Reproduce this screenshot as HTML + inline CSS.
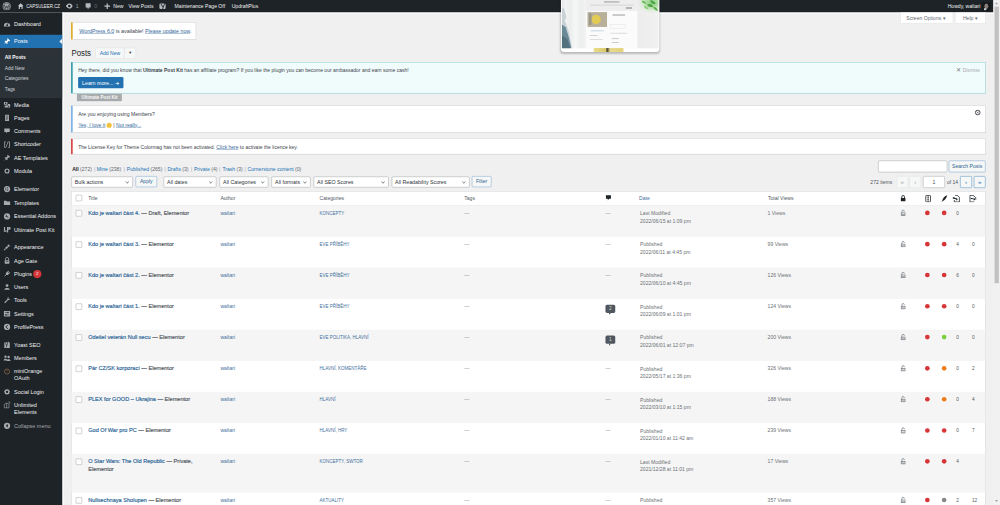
<!DOCTYPE html>
<html><head><meta charset="utf-8"><style>
html,body{margin:0;padding:0;width:1000px;height:505px;overflow:hidden;background:#f0f0f1;}
*{box-sizing:border-box;}
#root{position:absolute;left:0;top:0;width:2560px;height:1293px;transform:scale(0.390625);transform-origin:0 0;font-family:"Liberation Sans",sans-serif;font-size:13px;color:#3c434a;background:#f0f0f1;overflow:hidden;}
.a{position:absolute;white-space:nowrap;}
#ab{position:absolute;left:0;top:0;width:2543px;height:32px;background:#1d2327;color:#f0f0f1;font-size:13px;}
#ab .t{position:absolute;top:0;line-height:32px;white-space:nowrap;color:#f0f0f1;}
#ab svg, #menu svg{position:absolute;}
#menu{position:absolute;left:0;top:32px;width:160px;height:1261px;background:#1d2327;}
#menu .n{position:absolute;left:36px;white-space:nowrap;color:#f0f0f1;font-size:14px;line-height:18px;}
#menu .s{position:absolute;left:12px;font-size:12.6px;color:rgba(240,246,252,.82);white-space:nowrap;line-height:18px;}
#sb{position:absolute;left:2543px;top:0;width:17px;height:1293px;background:#f1f1f1;}
.lk{color:#35699a;text-decoration:underline;}
.notice{position:absolute;left:182px;width:2341px;background:#fff;border:1px solid #c3c4c7;border-left-width:4px;box-shadow:0 1px 1px rgba(0,0,0,.04);}
.btn2{position:absolute;height:30px;border:1px solid #5b8fc0;background:#f6f7f7;color:#2a5f8f;border-radius:3px;text-align:center;line-height:28px;font-size:13px;white-space:nowrap;}
.sel{position:absolute;height:28px;border:1px solid #8c8f94;background:#fff;border-radius:3px;color:#2c3338;font-size:13.5px;line-height:26px;padding-left:8px;white-space:nowrap;}
.sel:after{content:"";position:absolute;right:10px;top:8px;width:6px;height:6px;border-right:1.5px solid #50575e;border-bottom:1.5px solid #50575e;transform:rotate(45deg);}
.pbtn{position:absolute;height:30px;width:30px;border:1px solid #dcdcde;background:#f6f7f7;color:#a7aaad;border-radius:3px;text-align:center;line-height:28px;font-size:16px;}
.pbtn.on{border-color:#2271b1;color:#2271b1;}
.cb{position:absolute;width:16px;height:16px;border:1.3px solid #8c8f94;background:#fff;border-radius:2px;}
.hd{position:absolute;color:#50575e;font-size:13px;line-height:19.5px;white-space:nowrap;}
.hl{color:#2271b1;}
.hd.hl{color:#3f6d99;}
.c{position:absolute;font-size:13px;line-height:19.5px;white-space:nowrap;}
.ttl{color:#2a6496;font-size:14.3px;-webkit-text-stroke:0.4px #2a6496;}
.dot{position:absolute;width:12px;height:12px;border-radius:50%;}
</style></head><body><div id="root">
<div id="ab">
<svg style="left:6px;top:5px" width="22" height="22" viewBox="0 0 20 20"><circle cx="10" cy="10" r="9.5" fill="#a7aaad"/><circle cx="10" cy="10" r="7.8" fill="#1d2327"/><circle cx="10" cy="10" r="6.8" fill="#a7aaad"/><path d="M4.5 6.5 L7.5 15 L10 9 L12.5 15 L15.5 6.5" fill="none" stroke="#1d2327" stroke-width="1.6"/></svg>
<svg style="left:45px;top:7px" width="16" height="17" viewBox="0 0 16 17"><path d="M8 1 L15 8 L13 8 L13 16 L10 16 L10 11 L6 11 L6 16 L3 16 L3 8 L1 8 Z" fill="#c3c4c7"/></svg>
<div class="t" style="left:67px;font-size:13px;color:#f0f0f1;transform:scaleX(0.87);transform-origin:0 0">CAPSULEER.CZ</div>
<svg style="left:168px;top:7px" width="19" height="17" viewBox="0 0 19 17"><circle cx="9.5" cy="8.5" r="5" fill="none" stroke="#c3c4c7" stroke-width="3"/><path d="M0.5 8.5 L5 4 L5 13 Z M18.5 8.5 L14 4 L14 13Z" fill="#c3c4c7"/></svg>
<div class="t" style="left:194px;color:#9ea3a8">1</div>
<svg style="left:218px;top:7px" width="15" height="18" viewBox="0 0 15 18"><path d="M1 1 H14 V12 H9.5 L7.5 17 L5.5 12 H1 Z" fill="#b4b9be"/></svg>
<div class="t" style="left:241px;color:#646970;">0</div>
<svg style="left:267px;top:8px" width="15" height="15" viewBox="0 0 15 15"><path d="M6 0 H9 V6 H15 V9 H9 V15 H6 V9 H0 V6 H6 Z" fill="#c3c4c7"/></svg>
<div class="t" style="left:290px;">New</div>
<div class="t" style="left:329px;">View Posts</div>
<svg style="left:407px;top:6px" width="19" height="21" viewBox="0 0 19 21"><rect x="1" y="3" width="16" height="14" rx="3" fill="#b4b9be"/><path d="M5 4 L9.5 12 M15 1 L8.5 19" stroke="#1d2327" stroke-width="2.2" fill="none"/></svg>
<div class="t" style="left:447px;">Maintenance Page Off</div>
<div class="t" style="left:593px;">UpdraftPlus</div>
<div class="t" style="left:2426px;">Howdy, waltari</div>
<div class="a" style="left:2514px;top:6px;width:22px;height:22px;background:#15181a;overflow:hidden"><div class="a" style="left:6px;top:3px;width:10px;height:14px;border-radius:50%;background:#8a7d78"></div><div class="a" style="left:5px;top:15px;width:6px;height:5px;background:#c8c8c8"></div></div>
</div>
<div id="menu">
<svg style="left:8px;top:19px" width="20" height="20" viewBox="0 0 20 20"><path d="M2 15 A8 8 0 0 1 18 15 V17 H2 Z" fill="#a7aaad"/><path d="M10 14 L13 8" stroke="#1d2327" stroke-width="2"/><circle cx="10" cy="14" r="2" fill="#1d2327"/></svg>
<div class="n" style="top:20px">Dashboard</div>
<div class="a" style="left:0;top:57px;width:160px;height:34px;background:#2271b1"></div>
<svg style="left:151px;top:66px" width="9" height="16" viewBox="0 0 9 16"><path d="M9 0 L1 8 L9 16 Z" fill="#f0f0f1"/></svg>
<svg style="left:8px;top:64px" width="20" height="20" viewBox="0 0 20 20" fill="#fff"><path d="M12 2 L18 8 L16.5 9.5 L14 9 L11 12 L11.5 15 L10 16.5 L3.5 10 L5 8.5 L8 9 L11 6 L10.5 3.5 Z M6 13 L2 18 L7 14 Z"/></svg>
<div class="n" style="top:65px;color:#fff">Posts</div>
<div class="a" style="left:0;top:91px;width:160px;height:128px;background:#2c3338"></div>
<div class="s" style="top:104.5px;color:#fff;font-weight:bold">All Posts</div>
<div class="s" style="top:132.75px;">Add New</div>
<div class="s" style="top:161.0px;">Categories</div>
<div class="s" style="top:189.25px;">Tags</div>
<svg style="left:8px;top:226px" width="20" height="20" viewBox="0 0 20 20" fill="#a7aaad"><rect x="2" y="3" width="9" height="7" rx="1"/><circle cx="6.5" cy="6.5" r="1.8" fill="#1d2327"/><path d="M12 8 H18 V17 H4 V12 H12 Z"/><circle cx="14" cy="14" r="1.6" fill="#1d2327"/></svg>
<div class="n" style="top:227px;">Media</div>
<svg style="left:8px;top:260px" width="20" height="20" viewBox="0 0 20 20" fill="#a7aaad"><path d="M5 2 H15 V18 H5 Z"/><path d="M7 5 H13 M7 8 H13 M7 11 H13 M7 14 H11" stroke="#1d2327" stroke-width="1.2"/></svg>
<div class="n" style="top:261px;">Pages</div>
<svg style="left:8px;top:294px" width="20" height="20" viewBox="0 0 20 20" fill="#a7aaad"><path d="M3 3 H17 V12 H11 L8 16 V12 H3 Z"/></svg>
<div class="n" style="top:295px;">Comments</div>
<svg style="left:8px;top:328px" width="20" height="20" viewBox="0 0 20 20" fill="#a7aaad"><path d="M3 2 H7 V4 H5 V16 H7 V18 H3 Z M17 2 H13 V4 H15 V16 H13 V18 H17 Z M11.5 3 L13 3.6 L8.5 17 L7 16.4 Z"/></svg>
<div class="n" style="top:329px;">Shortcoder</div>
<svg style="left:8px;top:362px" width="20" height="20" viewBox="0 0 20 20" fill="#a7aaad"><path d="M12 2 L18 8 L16.5 9.5 L14 9 L11 12 L11.5 15 L10 16.5 L3.5 10 L5 8.5 L8 9 L11 6 L10.5 3.5 Z M6 13 L2 18 L7 14 Z"/></svg>
<div class="n" style="top:363px;">AE Templates</div>
<svg style="left:8px;top:396px" width="20" height="20" viewBox="0 0 20 20" fill="#a7aaad"><path d="M10 2 L12 5 L16 4 L15 8 L18 10 L15 12 L16 16 L12 15 L10 18 L8 15 L4 16 L5 12 L2 10 L5 8 L4 4 L8 5 Z"/><circle cx="10" cy="10" r="3.5" fill="#1d2327"/></svg>
<div class="n" style="top:397px;">Modula</div>
<svg style="left:8px;top:442px" width="20" height="20" viewBox="0 0 20 20" fill="#a7aaad"><circle cx="10" cy="10" r="8"/><path d="M7 6 V14 M10 6 H13 M10 10 H13 M10 14 H13" stroke="#1d2327" stroke-width="1.6"/></svg>
<div class="n" style="top:443px;">Elementor</div>
<svg style="left:8px;top:477px" width="20" height="20" viewBox="0 0 20 20" fill="#a7aaad"><path d="M2 5 H8 L10 7 H18 V16 H2 Z"/></svg>
<div class="n" style="top:478px;">Templates</div>
<svg style="left:8px;top:512px" width="20" height="20" viewBox="0 0 20 20" fill="#a7aaad"><circle cx="10" cy="10" r="8"/><path d="M6 10 H11 M7 6 L13 14" stroke="#1d2327" stroke-width="1.8"/></svg>
<div class="n" style="top:513px;">Essential Addons</div>
<svg style="left:8px;top:546px" width="20" height="20" viewBox="0 0 20 20" fill="#a7aaad"><path d="M2 3 H5 V12 H9 V15 H2 Z M10 3 H16 A3 3 0 0 1 16 10 H13 V17 H10 Z"/><path d="M13 6 H15" stroke="#1d2327" stroke-width="1.5"/></svg>
<div class="n" style="top:547px;">Ultimate Post Kit</div>
<svg style="left:8px;top:591px" width="20" height="20" viewBox="0 0 20 20" fill="#a7aaad"><path d="M13 2 L18 7 L14 9 L11 6 Z M10 7 L13 10 L8 15 L5 12 Z M4 13 L7 16 L3 18 L2 17 Z"/></svg>
<div class="n" style="top:592px;">Appearance</div>
<svg style="left:8px;top:625px" width="20" height="20" viewBox="0 0 20 20" fill="#a7aaad"><path d="M6 9 V6 A4 4 0 0 1 14 6 V9" fill="none" stroke="#a7aaad" stroke-width="2"/><rect x="4" y="9" width="12" height="9" rx="1"/><rect x="7" y="12" width="6" height="1.5" fill="#1d2327"/></svg>
<div class="n" style="top:626px;">Age Gate</div>
<svg style="left:8px;top:659px" width="20" height="20" viewBox="0 0 20 20" fill="#a7aaad"><path d="M13 2 L15 4 L12.5 6.5 L14 8 L16.5 5.5 L18 7 L15 10 L12 13 L8 13 L4 17 L3 16 L7 12 L7 8 L10 5 Z"/></svg>
<div class="n" style="top:660px;">Plugins</div>
<svg style="left:8px;top:693px" width="20" height="20" viewBox="0 0 20 20" fill="#a7aaad"><circle cx="10" cy="6" r="3.5"/><path d="M3 17 C3 11 17 11 17 17 Z"/></svg>
<div class="n" style="top:694px;">Users</div>
<svg style="left:8px;top:727px" width="20" height="20" viewBox="0 0 20 20" fill="#a7aaad"><path d="M15 2 A4 4 0 0 0 11 7 L3 15 L5 17 L13 9 A4 4 0 0 0 18 5 L16 7 L13 5 Z"/></svg>
<div class="n" style="top:728px;">Tools</div>
<svg style="left:8px;top:761px" width="20" height="20" viewBox="0 0 20 20" fill="#a7aaad"><rect x="2" y="3" width="16" height="14" rx="1"/><path d="M5 7 H15 M5 13 H15" stroke="#1d2327" stroke-width="1.4"/><rect x="11" y="5" width="2.5" height="4" fill="#1d2327"/><rect x="6" y="11" width="2.5" height="4" fill="#1d2327"/></svg>
<div class="n" style="top:762px;">Settings</div>
<svg style="left:8px;top:795px" width="20" height="20" viewBox="0 0 20 20" fill="#a7aaad"><circle cx="10" cy="10" r="8"/><path d="M12 5 L7 10 L12 15" fill="none" stroke="#1d2327" stroke-width="2.4"/></svg>
<div class="n" style="top:796px;">ProfilePress</div>
<svg style="left:8px;top:841px" width="20" height="20" viewBox="0 0 20 20" fill="#a7aaad"><path d="M3 4 H12 L14 2 H15 V4 H17 V18 H3 Z"/><path d="M6 6 L9 12 L12 5 M9 12 L8 16" stroke="#1d2327" stroke-width="1.8" fill="none"/></svg>
<div class="n" style="top:842px;">Yoast SEO</div>
<svg style="left:8px;top:875px" width="20" height="20" viewBox="0 0 20 20" fill="#a7aaad"><circle cx="6" cy="6" r="3"/><circle cx="14" cy="7" r="3"/><path d="M1 16 C1 10 11 10 11 16 Z M9 17 C9 11 19 11 19 17 Z"/></svg>
<div class="n" style="top:876px;">Members</div>
<svg style="left:8px;top:909px" width="20" height="20" viewBox="0 0 20 20" fill="#a7aaad"><circle cx="10" cy="10" r="6.5" fill="none" stroke="#a2754a" stroke-width="1.6"/><path d="M10 6 V10" stroke="#a2754a" stroke-width="1.4"/></svg>
<div class="n" style="top:910px;">miniOrange<br>OAuth</div>
<svg style="left:8px;top:961px" width="20" height="20" viewBox="0 0 20 20" fill="#a7aaad"><path d="M10 2 L12 4.5 L15.5 4 L15.5 7.5 L18 10 L15.5 12.5 L15.5 16 L12 15.5 L10 18 L8 15.5 L4.5 16 L4.5 12.5 L2 10 L4.5 7.5 L4.5 4 L8 4.5 Z"/><circle cx="10" cy="10" r="3" fill="#1d2327"/></svg>
<div class="n" style="top:962px;">Social Login</div>
<svg style="left:8px;top:995px" width="20" height="20" viewBox="0 0 20 20" fill="#a7aaad"><path d="M3 8 L9 5 L9 17 L3 17 Z M9 5 L15 8 L15 17 L9 17" fill="none" stroke="#a7aaad" stroke-width="1.5"/><path d="M12 2 H17 V7" fill="none" stroke="#a7aaad" stroke-width="1.5"/></svg>
<div class="n" style="top:996px;">Unlimited<br>Elements</div>
<svg style="left:8px;top:1048px" width="20" height="20" viewBox="0 0 20 20" fill="#a7aaad"><circle cx="10" cy="10" r="8"/><path d="M12 5.5 L6.5 10 L12 14.5 Z" fill="#1d2327"/></svg>
<div class="n" style="top:1049px;color:#a7aaad">Collapse menu</div>
<div class="a" style="left:85px;top:659px;width:21px;height:21px;border-radius:50%;background:#d63638;color:#fff;font-size:11px;line-height:21px;text-align:center">2</div>
</div>
<div class="a" style="left:160px;top:32px;width:3px;height:1261px;background:#fff"></div>
<div class="a" style="left:160px;top:32px;width:2383px;height:3px;background:#fff"></div>
<div class="a" style="left:2305px;top:32px;width:135px;height:28px;background:#fff;border:1px solid #dcdcde;border-top:none;color:#646970;font-size:13px;line-height:27px;padding-left:14px">Screen Options &#9662;</div>
<div class="a" style="left:2445px;top:32px;width:78px;height:28px;background:#fff;border:1px solid #dcdcde;border-top:none;color:#646970;font-size:13px;line-height:27px;padding-left:19px">Help &#9662;</div>
<div class="a" style="left:182px;top:57px;width:320px;height:44px;background:#fff;border:1px solid #c3c4c7;border-left:4px solid #dba617;box-shadow:0 1px 1px rgba(0,0,0,.04);padding:0 0 0 17px;line-height:46px;font-size:13.6px;color:#3c434a"><span class="lk">WordPress 6.0</span> is available! <span class="lk">Please update now</span>.</div>
<div class="a" style="left:183px;top:122px;font-size:23px;line-height:29px;color:#1d2327;transform:scaleX(0.87);transform-origin:0 0">Posts</div>
<div class="a" style="left:244px;top:122px;width:75px;height:28px;border:1px solid #dcdcde;background:#f6f7f7;color:#2271b1;font-size:13px;line-height:26px;text-align:center;border-radius:3px 0 0 3px">Add New</div>
<div class="a" style="left:318px;top:122px;width:30px;height:28px;border:1px solid #dcdcde;background:#f6f7f7;color:#2c3338;font-size:10px;line-height:26px;text-align:center;border-radius:0 3px 3px 0">&#9660;</div>
<div class="notice" style="top:159px;height:80px;border-color:#72c3ca;border-left-color:#2a95a5;background:#f0fbfc"></div>
<div class="a" style="left:200px;top:171.5px;font-size:13px;line-height:18px;transform:scaleX(0.985);transform-origin:0 0">Hey there, did you know that <b>Ultimate Post Kit</b> has an affiliate program? If you like the plugin you can become our ambassador and earn some cash!</div>
<div class="a" style="left:200px;top:197px;width:116px;height:29px;background:#2271b1;border-radius:3px;color:#fff;font-size:13.5px;line-height:32px;padding-left:10px">Learn more... &#10140;</div>
<div class="a" style="left:2448px;top:170px;font-size:12.5px;line-height:18px;color:#a7aaad"><span style="font-size:15px;color:#787c82">&#10005;</span> Dismiss</div>
<div class="a" style="left:197px;top:240px;width:115px;height:19px;background:#a7aaad;color:#f6f7f7;font-weight:bold;font-size:11.5px;line-height:20px;text-align:center">Ultimate Post Kit</div>
<div class="notice" style="top:270px;height:69px;border-left-color:#72aee6"></div>
<div class="a" style="left:200px;top:284px;font-size:13px;line-height:18px">Are you enjoying using Members?</div>
<div class="a" style="left:200px;top:312px;font-size:13px;line-height:18px"><span class="lk">Yes, I love it</span> <span style="display:inline-block;width:13px;height:13px;border-radius:50%;background:#f0c33c;vertical-align:-2px"></span> | <span class="lk">Not really...</span></div>
<svg class="a" style="left:2495px;top:280px" width="16" height="16" viewBox="0 0 16 16"><circle cx="8" cy="8" r="6" fill="none" stroke="#3c434a" stroke-width="2.4"/><path d="M5.5 5.5 L10.5 10.5 M10.5 5.5 L5.5 10.5" stroke="#3c434a" stroke-width="1.6"/></svg>
<div class="notice" style="top:355px;height:40px;border-left-color:#d63638"></div>
<div class="a" style="left:200px;top:369px;font-size:13px;line-height:18px;transform:scaleX(0.98);transform-origin:0 0">The License Key for Theme Colormag has not been activated. <span class="lk">Click here</span> to activate the licence key.</div>
<div class="a" style="left:2248px;top:411px;width:177px;height:30px;background:#fff;border:1px solid #8c8f94;border-radius:4px"></div>
<div class="btn2" style="left:2429px;top:411px;width:94px">Search Posts</div>
<div class="a" style="left:184.8px;top:424px;font-size:13px;line-height:18px;color:#a7aaad"><b style="color:#1d2327">All</b> <span style="color:#646970">(272)</span></div>
<div class="a" style="left:240.6px;top:424px;font-size:13px;line-height:18px;color:#a7aaad">|</div>
<div class="a" style="left:247.8px;top:424px;font-size:13px;line-height:18px;color:#a7aaad"><span class="hl">Mine</span> <span style="color:#646970">(238)</span></div>
<div class="a" style="left:316px;top:424px;font-size:13px;line-height:18px;color:#a7aaad">|</div>
<div class="a" style="left:324.6px;top:424px;font-size:13px;line-height:18px;color:#a7aaad"><span class="hl">Published</span> <span style="color:#646970">(265)</span></div>
<div class="a" style="left:421px;top:424px;font-size:13px;line-height:18px;color:#a7aaad">|</div>
<div class="a" style="left:428.5px;top:424px;font-size:13px;line-height:18px;color:#a7aaad"><span class="hl">Drafts</span> <span style="color:#646970">(3)</span></div>
<div class="a" style="left:488px;top:424px;font-size:13px;line-height:18px;color:#a7aaad">|</div>
<div class="a" style="left:496.6px;top:424px;font-size:13px;line-height:18px;color:#a7aaad"><span class="hl">Private</span> <span style="color:#646970">(4)</span></div>
<div class="a" style="left:560.6px;top:424px;font-size:13px;line-height:18px;color:#a7aaad">|</div>
<div class="a" style="left:569.3px;top:424px;font-size:13px;line-height:18px;color:#a7aaad"><span class="hl">Trash</span> <span style="color:#646970">(3)</span></div>
<div class="a" style="left:625.7px;top:424px;font-size:13px;line-height:18px;color:#a7aaad">|</div>
<div class="a" style="left:633.9px;top:424px;font-size:13px;line-height:18px;color:#a7aaad"><span class="hl">Cornerstone content</span> <span style="color:#646970">(0)</span></div>
<div class="a" style="display:none"><b style="color:#000;font-weight:600">All</b> <span style="color:#646970">(272)</span> | <span class="hl">Mine <span style="color:#646970">(238)</span></span> | <span class="hl">Published <span style="color:#646970">(265)</span></span> | <span class="hl">Drafts <span style="color:#646970">(3)</span></span> | <span class="hl">Private <span style="color:#646970">(4)</span></span> | <span class="hl">Trash <span style="color:#646970">(3)</span></span> | <span class="hl">Cornerstone content <span style="color:#646970">(0)</span></span></div>
<div class="sel" style="left:182.5px;top:452px;width:157.5px">Bulk actions</div>
<div class="sel" style="left:418.8px;top:452px;width:135.7px">All dates</div>
<div class="sel" style="left:562.2px;top:452px;width:125px">All Categories</div>
<div class="sel" style="left:695.3px;top:452px;width:100px">All formats</div>
<div class="sel" style="left:802.8px;top:452px;width:192px">All SEO Scores</div>
<div class="sel" style="left:1002.5px;top:452px;width:199px">All Readability Scores</div>
<div class="btn2" style="left:347px;top:451px;width:55px;height:28px;line-height:26px">Apply</div>
<div class="btn2" style="left:1208px;top:451px;width:50px;height:28px;line-height:26px">Filter</div>
<div class="a" style="left:2228px;top:456px;font-size:13px;line-height:20px;color:#50575e">272 items</div>
<div class="pbtn" style="left:2295px;top:451px">&laquo;</div>
<div class="pbtn" style="left:2328px;top:451px">&lsaquo;</div>
<div class="a" style="left:2363px;top:451px;width:56px;height:30px;background:#fff;border:1px solid #8c8f94;border-radius:4px;text-align:center;line-height:28px;font-size:13px">1</div>
<div class="a" style="left:2424px;top:456px;font-size:13px;line-height:20px;color:#50575e">of 14</div>
<div class="pbtn on" style="left:2458px;top:451px">&rsaquo;</div>
<div class="pbtn on" style="left:2493px;top:451px">&raquo;</div>
<div class="a" style="left:182px;top:489px;width:2341px;height:811px;background:#fff;border:1px solid #c3c4c7"></div>
<div class="a" style="left:183px;top:525px;width:2339px;height:1px;background:#c3c4c7"></div>
<div class="cb" style="left:194px;top:499px"></div>
<div class="hd " style="left:225.8px;top:498px">Title</div>
<div class="hd " style="left:564.2px;top:498px">Author</div>
<div class="hd " style="left:818px;top:498px">Categories</div>
<div class="hd " style="left:1188.4px;top:498px">Tags</div>
<div class="hd hl" style="left:1636px;top:498px">Date</div>
<div class="hd " style="left:1966px;top:498px">Total Views</div>
<svg class="a" style="left:1550px;top:499px" width="15" height="16" viewBox="0 0 15 16"><path d="M1 1 H14 V10 H9 L6 14 V10 H1 Z" fill="#1d2327"/></svg>
<svg class="a" style="left:2305px;top:499px" width="14" height="17" viewBox="0 0 14 17"><path d="M3.5 8 V5 A3.5 3.5 0 0 1 10.5 5 V8" fill="none" stroke="#1d2327" stroke-width="2.2"/><rect x="1" y="8" width="12" height="9" rx="1" fill="#1d2327"/></svg>
<svg class="a" style="left:2368px;top:499px" width="16" height="19" viewBox="0 0 16 19"><rect x="2" y="1" width="12" height="17" rx="2" fill="none" stroke="#1d2327" stroke-width="2"/><path d="M8 1 V18" stroke="#1d2327" stroke-width="1.5"/><path d="M6 6 H10 M6 12 H10" stroke="#1d2327" stroke-width="1.5"/></svg>
<svg class="a" style="left:2409px;top:499px" width="17" height="19" viewBox="0 0 17 19"><path d="M16 1 C9 3 5 8 3 15 L1 18 L4 16 C10 14 14 9 16 1 Z" fill="#1d2327"/></svg>
<svg class="a" style="left:2438px;top:499px" width="20" height="19" viewBox="0 0 20 19"><path d="M7 1 H13 L18 6 V18 H5 V13" fill="none" stroke="#1d2327" stroke-width="2"/><path d="M1 6 C4 6 8 7 10 10 L10 7 L14 11 L10 15 L10 12 C7 10 4 9 1 10 Z" fill="#1d2327"/></svg>
<svg class="a" style="left:2481px;top:499px" width="20" height="19" viewBox="0 0 20 19"><path d="M13 18 H2 V1 H10 L17 7 V12" fill="none" stroke="#1d2327" stroke-width="2"/><path d="M4 8 C7 7 10 8 12 10 L12 7 L16 11 L12 15 L12 12 C10 11 7 10 4 11 Z" fill="#1d2327"/></svg>
<div class="a" style="left:183px;top:526px;width:2339px;height:79.5px;background:#f5f5f5"></div>
<div class="cb" style="left:194px;top:538px"></div>
<div class="c" style="left:225.8px;top:536px;color:#50575e"><span class="ttl">Kdo je waltari část 4.</span><span style="color:#50575e;font-size:14.3px;-webkit-text-stroke:0.4px #50575e"> — Draft, Elementor</span></div>
<div class="c" style="left:564.2px;top:536px;color:#3f709c">waltari</div>
<div class="c" style="left:818px;top:537px;color:#3f709c;font-size:11.5px">KONCEPTY</div>
<div class="c" style="left:1188.4px;top:536px;color:#80848a">—</div>
<div class="c" style="left:1550px;top:536px;color:#80848a">—</div>
<div class="c" style="left:1638.5px;top:536px;color:#6b7075;font-size:13px;line-height:19.5px;margin-top:1px">Last Modified<br>2022/06/15 at 1:09 pm</div>
<div class="c" style="left:1965px;top:536px;color:#6b7075;font-size:13px">1 Views</div>
<svg class="a" style="left:2305px;top:536px" width="14" height="17" viewBox="0 0 14 17"><path d="M4 9 V5 A3 3 0 0 1 10 5 V6" fill="none" stroke="#646970" stroke-width="1.6"/><rect x="2" y="9" width="10" height="7" fill="none" stroke="#646970" stroke-width="1.6"/><rect x="3" y="12" width="8" height="3" fill="#646970" opacity=".6"/></svg>
<div class="dot" style="left:2368px;top:539px;background:#d63638"></div>
<div class="dot" style="left:2411px;top:539px;background:#d63638"></div>
<div class="c" style="left:2448px;top:537px;color:#50575e;font-size:12px">0</div>
<div class="c" style="left:2488px;top:537px;color:#50575e;font-size:12px"></div>
<div class="cb" style="left:194px;top:617.5px"></div>
<div class="c" style="left:225.8px;top:615.5px;color:#50575e"><span class="ttl">Kdo je waltari část 3.</span><span style="color:#50575e;font-size:14.3px;-webkit-text-stroke:0.4px #50575e"> — Elementor</span></div>
<div class="c" style="left:564.2px;top:615.5px;color:#3f709c">waltari</div>
<div class="c" style="left:818px;top:616.5px;color:#3f709c;font-size:11.5px">EVE PŘÍBĚHY</div>
<div class="c" style="left:1188.4px;top:615.5px;color:#80848a">—</div>
<div class="c" style="left:1550px;top:615.5px;color:#80848a">—</div>
<div class="c" style="left:1638.5px;top:615.5px;color:#6b7075;font-size:13px;line-height:19.5px;margin-top:1px">Published<br>2022/06/11 at 4:45 pm</div>
<div class="c" style="left:1965px;top:615.5px;color:#6b7075;font-size:13px">99 Views</div>
<svg class="a" style="left:2305px;top:615.5px" width="14" height="17" viewBox="0 0 14 17"><path d="M4 9 V5 A3 3 0 0 1 10 5 V6" fill="none" stroke="#646970" stroke-width="1.6"/><rect x="2" y="9" width="10" height="7" fill="none" stroke="#646970" stroke-width="1.6"/><rect x="3" y="12" width="8" height="3" fill="#646970" opacity=".6"/></svg>
<div class="dot" style="left:2368px;top:618.5px;background:#d63638"></div>
<div class="dot" style="left:2411px;top:618.5px;background:#d63638"></div>
<div class="c" style="left:2448px;top:616.5px;color:#50575e;font-size:12px">4</div>
<div class="c" style="left:2488px;top:616.5px;color:#50575e;font-size:12px">0</div>
<div class="a" style="left:183px;top:685.0px;width:2339px;height:79.5px;background:#f5f5f5"></div>
<div class="cb" style="left:194px;top:697.0px"></div>
<div class="c" style="left:225.8px;top:695.0px;color:#50575e"><span class="ttl">Kdo je waltari část 2.</span><span style="color:#50575e;font-size:14.3px;-webkit-text-stroke:0.4px #50575e"> — Elementor</span></div>
<div class="c" style="left:564.2px;top:695.0px;color:#3f709c">waltari</div>
<div class="c" style="left:818px;top:696.0px;color:#3f709c;font-size:11.5px">EVE PŘÍBĚHY</div>
<div class="c" style="left:1188.4px;top:695.0px;color:#80848a">—</div>
<div class="c" style="left:1550px;top:695.0px;color:#80848a">—</div>
<div class="c" style="left:1638.5px;top:695.0px;color:#6b7075;font-size:13px;line-height:19.5px;margin-top:1px">Published<br>2022/06/10 at 4:45 pm</div>
<div class="c" style="left:1965px;top:695.0px;color:#6b7075;font-size:13px">126 Views</div>
<svg class="a" style="left:2305px;top:695.0px" width="14" height="17" viewBox="0 0 14 17"><path d="M4 9 V5 A3 3 0 0 1 10 5 V6" fill="none" stroke="#646970" stroke-width="1.6"/><rect x="2" y="9" width="10" height="7" fill="none" stroke="#646970" stroke-width="1.6"/><rect x="3" y="12" width="8" height="3" fill="#646970" opacity=".6"/></svg>
<div class="dot" style="left:2368px;top:698.0px;background:#d63638"></div>
<div class="dot" style="left:2411px;top:698.0px;background:#d63638"></div>
<div class="c" style="left:2448px;top:696.0px;color:#50575e;font-size:12px">6</div>
<div class="c" style="left:2488px;top:696.0px;color:#50575e;font-size:12px">0</div>
<div class="cb" style="left:194px;top:776.5px"></div>
<div class="c" style="left:225.8px;top:774.5px;color:#50575e"><span class="ttl">Kdo je waltari část 1.</span><span style="color:#50575e;font-size:14.3px;-webkit-text-stroke:0.4px #50575e"> — Elementor</span></div>
<div class="c" style="left:564.2px;top:774.5px;color:#3f709c">waltari</div>
<div class="c" style="left:818px;top:775.5px;color:#3f709c;font-size:11.5px">EVE PŘÍBĚHY</div>
<div class="c" style="left:1188.4px;top:774.5px;color:#80848a">—</div>
<div class="a" style="left:1550px;top:779.5px;width:25px;height:21px;background:#50575e;border-radius:4px;color:#dcdcde;font-size:12px;line-height:21px;text-align:center">2</div>
<div class="a" style="left:1559px;top:800.5px;width:0;height:0;border-left:5px solid #50575e;border-right:0 solid transparent;border-bottom:5px solid transparent"></div>
<div class="c" style="left:1638.5px;top:774.5px;color:#6b7075;font-size:13px;line-height:19.5px;margin-top:1px">Published<br>2022/06/09 at 1:01 pm</div>
<div class="c" style="left:1965px;top:774.5px;color:#6b7075;font-size:13px">124 Views</div>
<svg class="a" style="left:2305px;top:774.5px" width="14" height="17" viewBox="0 0 14 17"><path d="M4 9 V5 A3 3 0 0 1 10 5 V6" fill="none" stroke="#646970" stroke-width="1.6"/><rect x="2" y="9" width="10" height="7" fill="none" stroke="#646970" stroke-width="1.6"/><rect x="3" y="12" width="8" height="3" fill="#646970" opacity=".6"/></svg>
<div class="dot" style="left:2368px;top:777.5px;background:#d63638"></div>
<div class="dot" style="left:2411px;top:777.5px;background:#d63638"></div>
<div class="c" style="left:2448px;top:775.5px;color:#50575e;font-size:12px">0</div>
<div class="c" style="left:2488px;top:775.5px;color:#50575e;font-size:12px">0</div>
<div class="a" style="left:183px;top:844.0px;width:2339px;height:79.5px;background:#f5f5f5"></div>
<div class="cb" style="left:194px;top:856.0px"></div>
<div class="c" style="left:225.8px;top:854.0px;color:#50575e"><span class="ttl">Odešel veterán Null secu</span><span style="color:#50575e;font-size:14.3px;-webkit-text-stroke:0.4px #50575e"> — Elementor</span></div>
<div class="c" style="left:564.2px;top:854.0px;color:#3f709c">waltari</div>
<div class="c" style="left:818px;top:855.0px;color:#3f709c;font-size:11.5px">EVE POLITIKA, HLAVNÍ</div>
<div class="c" style="left:1188.4px;top:854.0px;color:#80848a">—</div>
<div class="a" style="left:1550px;top:859.0px;width:25px;height:21px;background:#50575e;border-radius:4px;color:#dcdcde;font-size:12px;line-height:21px;text-align:center">1</div>
<div class="a" style="left:1559px;top:880.0px;width:0;height:0;border-left:5px solid #50575e;border-right:0 solid transparent;border-bottom:5px solid transparent"></div>
<div class="c" style="left:1638.5px;top:854.0px;color:#6b7075;font-size:13px;line-height:19.5px;margin-top:1px">Published<br>2022/06/01 at 12:07 pm</div>
<div class="c" style="left:1965px;top:854.0px;color:#6b7075;font-size:13px">200 Views</div>
<svg class="a" style="left:2305px;top:854.0px" width="14" height="17" viewBox="0 0 14 17"><path d="M4 9 V5 A3 3 0 0 1 10 5 V6" fill="none" stroke="#646970" stroke-width="1.6"/><rect x="2" y="9" width="10" height="7" fill="none" stroke="#646970" stroke-width="1.6"/><rect x="3" y="12" width="8" height="3" fill="#646970" opacity=".6"/></svg>
<div class="dot" style="left:2368px;top:857.0px;background:#d63638"></div>
<div class="dot" style="left:2411px;top:857.0px;background:#7ad03a"></div>
<div class="c" style="left:2448px;top:855.0px;color:#50575e;font-size:12px">0</div>
<div class="c" style="left:2488px;top:855.0px;color:#50575e;font-size:12px">0</div>
<div class="cb" style="left:194px;top:935.5px"></div>
<div class="c" style="left:225.8px;top:933.5px;color:#50575e"><span class="ttl">Pár CZ/SK korporací</span><span style="color:#50575e;font-size:14.3px;-webkit-text-stroke:0.4px #50575e"> — Elementor</span></div>
<div class="c" style="left:564.2px;top:933.5px;color:#3f709c">waltari</div>
<div class="c" style="left:818px;top:934.5px;color:#3f709c;font-size:11.5px">HLAVNÍ, KOMENTÁŘE</div>
<div class="c" style="left:1188.4px;top:933.5px;color:#80848a">—</div>
<div class="c" style="left:1550px;top:933.5px;color:#80848a">—</div>
<div class="c" style="left:1638.5px;top:933.5px;color:#6b7075;font-size:13px;line-height:19.5px;margin-top:1px">Published<br>2022/05/17 at 1:36 pm</div>
<div class="c" style="left:1965px;top:933.5px;color:#6b7075;font-size:13px">326 Views</div>
<svg class="a" style="left:2305px;top:933.5px" width="14" height="17" viewBox="0 0 14 17"><path d="M4 9 V5 A3 3 0 0 1 10 5 V6" fill="none" stroke="#646970" stroke-width="1.6"/><rect x="2" y="9" width="10" height="7" fill="none" stroke="#646970" stroke-width="1.6"/><rect x="3" y="12" width="8" height="3" fill="#646970" opacity=".6"/></svg>
<div class="dot" style="left:2368px;top:936.5px;background:#d63638"></div>
<div class="dot" style="left:2411px;top:936.5px;background:#ee7c1b"></div>
<div class="c" style="left:2448px;top:934.5px;color:#50575e;font-size:12px">0</div>
<div class="c" style="left:2488px;top:934.5px;color:#50575e;font-size:12px">2</div>
<div class="a" style="left:183px;top:1003.0px;width:2339px;height:79.5px;background:#f5f5f5"></div>
<div class="cb" style="left:194px;top:1015.0px"></div>
<div class="c" style="left:225.8px;top:1013.0px;color:#50575e"><span class="ttl">PLEX for GOOD – Ukrajina</span><span style="color:#50575e;font-size:14.3px;-webkit-text-stroke:0.4px #50575e"> — Elementor</span></div>
<div class="c" style="left:564.2px;top:1013.0px;color:#3f709c">waltari</div>
<div class="c" style="left:818px;top:1014.0px;color:#3f709c;font-size:11.5px">HLAVNÍ</div>
<div class="c" style="left:1188.4px;top:1013.0px;color:#80848a">—</div>
<div class="c" style="left:1550px;top:1013.0px;color:#80848a">—</div>
<div class="c" style="left:1638.5px;top:1013.0px;color:#6b7075;font-size:13px;line-height:19.5px;margin-top:1px">Published<br>2022/03/10 at 1:15 pm</div>
<div class="c" style="left:1965px;top:1013.0px;color:#6b7075;font-size:13px">188 Views</div>
<svg class="a" style="left:2305px;top:1013.0px" width="14" height="17" viewBox="0 0 14 17"><path d="M4 9 V5 A3 3 0 0 1 10 5 V6" fill="none" stroke="#646970" stroke-width="1.6"/><rect x="2" y="9" width="10" height="7" fill="none" stroke="#646970" stroke-width="1.6"/><rect x="3" y="12" width="8" height="3" fill="#646970" opacity=".6"/></svg>
<div class="dot" style="left:2368px;top:1016.0px;background:#d63638"></div>
<div class="dot" style="left:2411px;top:1016.0px;background:#ee7c1b"></div>
<div class="c" style="left:2448px;top:1014.0px;color:#50575e;font-size:12px">0</div>
<div class="c" style="left:2488px;top:1014.0px;color:#50575e;font-size:12px">4</div>
<div class="cb" style="left:194px;top:1094.5px"></div>
<div class="c" style="left:225.8px;top:1092.5px;color:#50575e"><span class="ttl">God Of War pro PC</span><span style="color:#50575e;font-size:14.3px;-webkit-text-stroke:0.4px #50575e"> — Elementor</span></div>
<div class="c" style="left:564.2px;top:1092.5px;color:#3f709c">waltari</div>
<div class="c" style="left:818px;top:1093.5px;color:#3f709c;font-size:11.5px">HLAVNÍ, HRY</div>
<div class="c" style="left:1188.4px;top:1092.5px;color:#80848a">—</div>
<div class="c" style="left:1550px;top:1092.5px;color:#80848a">—</div>
<div class="c" style="left:1638.5px;top:1092.5px;color:#6b7075;font-size:13px;line-height:19.5px;margin-top:1px">Published<br>2022/01/10 at 11:42 am</div>
<div class="c" style="left:1965px;top:1092.5px;color:#6b7075;font-size:13px">239 Views</div>
<svg class="a" style="left:2305px;top:1092.5px" width="14" height="17" viewBox="0 0 14 17"><path d="M4 9 V5 A3 3 0 0 1 10 5 V6" fill="none" stroke="#646970" stroke-width="1.6"/><rect x="2" y="9" width="10" height="7" fill="none" stroke="#646970" stroke-width="1.6"/><rect x="3" y="12" width="8" height="3" fill="#646970" opacity=".6"/></svg>
<div class="dot" style="left:2368px;top:1095.5px;background:#d63638"></div>
<div class="dot" style="left:2411px;top:1095.5px;background:#d63638"></div>
<div class="c" style="left:2448px;top:1093.5px;color:#50575e;font-size:12px">0</div>
<div class="c" style="left:2488px;top:1093.5px;color:#50575e;font-size:12px">7</div>
<div class="a" style="left:183px;top:1162.0px;width:2339px;height:99.0px;background:#f5f5f5"></div>
<div class="cb" style="left:194px;top:1174.0px"></div>
<div class="c" style="left:225.8px;top:1172.0px;color:#50575e"><span class="ttl">O Star Wars: The Old Republic</span><span style="color:#50575e;font-size:14.3px;-webkit-text-stroke:0.4px #50575e"> — Private,<br>Elementor</span></div>
<div class="c" style="left:564.2px;top:1172.0px;color:#3f709c">waltari</div>
<div class="c" style="left:818px;top:1173.0px;color:#3f709c;font-size:11.5px">KONCEPTY, SWTOR</div>
<div class="c" style="left:1188.4px;top:1172.0px;color:#80848a">—</div>
<div class="c" style="left:1550px;top:1172.0px;color:#80848a">—</div>
<div class="c" style="left:1638.5px;top:1172.0px;color:#6b7075;font-size:13px;line-height:19.5px;margin-top:1px">Last Modified<br>2021/12/28 at 11:01 pm</div>
<div class="c" style="left:1965px;top:1172.0px;color:#6b7075;font-size:13px">17 Views</div>
<svg class="a" style="left:2305px;top:1172.0px" width="14" height="17" viewBox="0 0 14 17"><path d="M4 9 V5 A3 3 0 0 1 10 5 V6" fill="none" stroke="#646970" stroke-width="1.6"/><rect x="2" y="9" width="10" height="7" fill="none" stroke="#646970" stroke-width="1.6"/><rect x="3" y="12" width="8" height="3" fill="#646970" opacity=".6"/></svg>
<div class="dot" style="left:2368px;top:1175.0px;background:#d63638"></div>
<div class="dot" style="left:2411px;top:1175.0px;background:#d63638"></div>
<div class="c" style="left:2448px;top:1173.0px;color:#50575e;font-size:12px">4</div>
<div class="c" style="left:2488px;top:1173.0px;color:#50575e;font-size:12px"></div>
<div class="cb" style="left:194px;top:1273.0px"></div>
<div class="c" style="left:225.8px;top:1271.0px;color:#50575e"><span class="ttl">Nullsechnaya Sholupen</span><span style="color:#50575e;font-size:14.3px;-webkit-text-stroke:0.4px #50575e"> — Elementor</span></div>
<div class="c" style="left:564.2px;top:1271.0px;color:#3f709c">waltari</div>
<div class="c" style="left:818px;top:1272.0px;color:#3f709c;font-size:11.5px">AKTUALITY</div>
<div class="c" style="left:1188.4px;top:1271.0px;color:#80848a">—</div>
<div class="c" style="left:1550px;top:1271.0px;color:#80848a">—</div>
<div class="c" style="left:1638.5px;top:1271.0px;color:#6b7075;font-size:13px;line-height:19.5px;margin-top:1px">Published<br>2022/01/05 at 10:00 am</div>
<div class="c" style="left:1965px;top:1271.0px;color:#6b7075;font-size:13px">357 Views</div>
<svg class="a" style="left:2305px;top:1271.0px" width="14" height="17" viewBox="0 0 14 17"><path d="M4 9 V5 A3 3 0 0 1 10 5 V6" fill="none" stroke="#646970" stroke-width="1.6"/><rect x="2" y="9" width="10" height="7" fill="none" stroke="#646970" stroke-width="1.6"/><rect x="3" y="12" width="8" height="3" fill="#646970" opacity=".6"/></svg>
<div class="dot" style="left:2368px;top:1274.0px;background:#d63638"></div>
<div class="dot" style="left:2411px;top:1274.0px;background:#888"></div>
<div class="c" style="left:2448px;top:1272.0px;color:#50575e;font-size:12px">2</div>
<div class="c" style="left:2488px;top:1272.0px;color:#50575e;font-size:12px">12</div>
<div class="a" style="left:1436px;top:0;width:252px;height:133px;background:#fff;border-radius:0 0 9px 9px;box-shadow:0 3px 5px rgba(0,0,0,.22)"></div>
<div class="a" style="left:1438px;top:0;width:248px;height:124px;overflow:hidden;background:#f7f7f7"><div class="a" style="left:0;top:0;width:62px;height:124px;background:linear-gradient(90deg,#e4e7e8 0,#f2f3f3 15%,#ebeded 35%,#f6f6f6 55%,#eceeee 80%,#f3f3f3 100%)"></div><svg class="a" style="left:0;top:0" width="40" height="124" viewBox="0 0 40 124"><path d="M0 20 L6 22 L12 45 L8 52 L18 80 L26 124 L0 124 Z" fill="#c9d2d6"/><path d="M0 62 L10 70 L18 95 L25 124 L0 124 Z" fill="#6a8a98"/><path d="M0 90 L14 100 L22 124 L0 124 Z" fill="#52717f"/></svg><div class="a" style="left:62px;top:0;width:132px;height:124px;background:#fbfbfb"></div><div class="a" style="left:62px;top:0;width:132px;height:28px;background:#eeeeee"></div><div class="a" style="left:108px;top:3px;width:40px;height:4px;background:#b9b9b9"></div><div class="a" style="left:72px;top:12px;width:112px;height:2px;background:#cfcfcf"></div><div class="a" style="left:164px;top:19px;width:16px;height:3px;background:#8e8e8e"></div><div class="a" style="left:66px;top:31px;width:50px;height:38px;background:#b8b09a"></div><div class="a" style="left:76px;top:38px;width:24px;height:24px;border-radius:50%;background:#e2ca54"></div><div class="a" style="left:70px;top:34px;width:6px;height:30px;background:#9a9585"></div><div class="a" style="left:74px;top:78px;width:34px;height:2px;background:#b7c9dd"></div><div class="a" style="left:72px;top:90px;width:20px;height:2px;background:#c9c9c9"></div><div class="a" style="left:72px;top:100px;width:32px;height:2px;background:#d6d6d6"></div><div class="a" style="left:130px;top:37px;width:32px;height:3px;background:#a9a9a9"></div><div class="a" style="left:124px;top:62px;width:40px;height:12px;border:1px solid #dddddd"></div><div class="a" style="left:124px;top:84px;width:44px;height:2px;background:#d0d8d0"></div><div class="a" style="left:128px;top:98px;width:18px;height:2px;background:#bdbdbd"></div><div class="a" style="left:128px;top:108px;width:18px;height:2px;background:#bdbdbd"></div><div class="a" style="left:194px;top:0;width:54px;height:124px;background:linear-gradient(90deg,#ececec,#f1f1f1)"></div><div class="a" style="left:192px;top:0;width:56px;height:36px;background:radial-gradient(ellipse 65% 75% at 70% 20%,rgba(120,200,105,.9) 0,rgba(150,215,135,.75) 40%,rgba(200,232,190,.5) 70%,rgba(236,236,236,0) 100%)"></div><svg class="a" style="left:196px;top:0" width="52" height="36" viewBox="0 0 52 36"><path d="M8 2 C16 0 22 6 20 10 C14 10 9 6 8 2Z" fill="#6fbf60"/><path d="M22 12 C30 8 38 12 38 18 C30 19 24 16 22 12Z" fill="#4ea545"/><path d="M30 0 C38 2 44 6 44 10 C36 10 32 6 30 0Z" fill="#3f9a3c"/><path d="M38 18 C44 16 50 22 50 28 C44 27 40 24 38 18Z" fill="#5cb352"/><path d="M14 16 C20 14 26 20 26 24 C20 24 16 20 14 16Z" fill="#8ccf7a"/></svg></div>
<div class="a" style="left:1520px;top:123px;width:76px;height:10px;background:linear-gradient(90deg,#e8dc8a,#d9c96a 40%,#3d3a2a 45%,#e6d98c 55%,#e3d27a)"></div>
<div id="sb"><div class="a" style="left:4px;top:6px;width:0;height:0;border-left:4.5px solid transparent;border-right:4.5px solid transparent;border-bottom:5px solid #a3a3a3"></div><div class="a" style="left:3px;top:17px;width:11px;height:708px;background:#c1c1c1"></div><div class="a" style="left:4px;top:1280px;width:0;height:0;border-left:4.5px solid transparent;border-right:4.5px solid transparent;border-top:5px solid #a3a3a3"></div></div>
</div></body></html>
